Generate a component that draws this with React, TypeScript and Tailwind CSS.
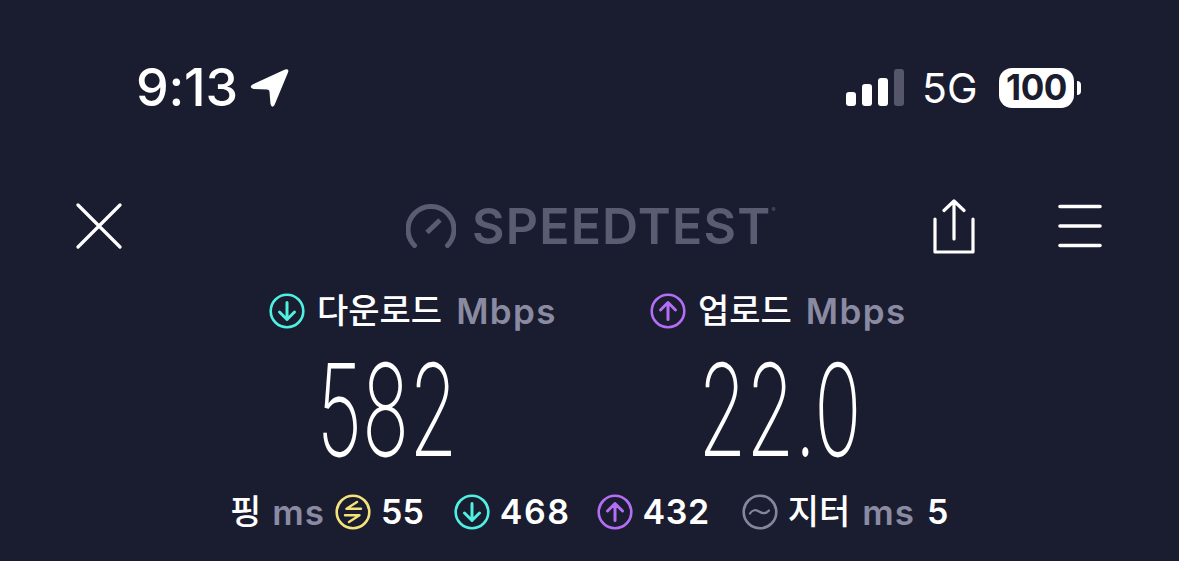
const sans = "font-['Inter','Noto_Sans_CJK_KR',sans-serif]"

function CircleIcon({ color, kind, size = 36 }: { color: string; kind: "down" | "up" | "ping" | "jitter"; size?: number }) {
    return (
        <svg width={size} height={size} viewBox="0 0 36 36" fill="none" stroke={color} strokeLinecap="round" strokeLinejoin="round" className="shrink-0">
            <circle cx="18" cy="18" r="16.3" strokeWidth="2.6" />
            {kind === "down" && <path d="M18 9.500v17M10.500 19l7.500 7.500 7.500-7.500" strokeWidth="3" />}
            {kind === "up" && <path d="M18 26.500v-17M10.500 17l7.500-7.500 7.500 7.500" strokeWidth="3" />}
            {kind === "ping" && <path d="M22 8L11.500 14.800H26M10 21.200H24.500L14 28" strokeWidth="2.400" />}
            {kind === "jitter" && <path d="M8 19.500c2.500-4 6-4 9-2s6.500 3 10-1" strokeWidth="2.200" />}
        </svg>
    )
}

function StatusBar() {
    return (
        <div className="flex h-[68px] items-center justify-between pl-[136px] pr-[98px]">
            <div className="flex items-center gap-[12px]">
                <span className="text-[52px] font-medium leading-none tracking-[-0.2px] text-white">9:13</span>
                <svg width="40" height="40" viewBox="0 0 40 40" fill="#fff">
                    <path d="M35 1.500 Q39.500 0 38 4.500 L24.500 37 Q22 41 20.500 36 L19.500 24 Q19.500 21.500 17 21.500 L3.500 21 Q-1.500 19.500 2.500 16.500 Z" />
                </svg>
            </div>
            <div className="flex items-center">
                <div className="mb-[3px] flex h-[38px] items-end gap-[6px]">
                    <div className="h-[14px] w-[10px] rounded-[3px] bg-white" />
                    <div className="h-[22px] w-[10px] rounded-[3px] bg-white" />
                    <div className="h-[28px] w-[10px] rounded-[3px] bg-white" />
                    <div className="h-[37px] w-[10px] rounded-[3px] bg-[#55566a]" />
                </div>
                <span className="ml-[18px] text-[41px] leading-none tracking-[0.3px] text-white">5G</span>
                <div className="mb-[1px] ml-[21px] flex h-[40px] w-[75px] items-center justify-center rounded-[13px] bg-white">
                    <span className="text-[35px] font-bold leading-none tracking-[-0.5px] text-[#1a1c30]">100</span>
                </div>
                <div className="ml-[3px] h-[14px] w-[4px] rounded-r-full bg-white" />
            </div>
        </div>
    )
}

function NavBar() {
    return (
        <div className="mt-[69px] flex h-[70px] items-center pl-[76px] pr-[77px]">
            <svg width="46" height="46" viewBox="0 0 46 46" stroke="#fff" strokeWidth="3.200" strokeLinecap="round" className="shrink-0">
                <path d="M2 2l42 42M44 2L2 44" />
            </svg>
            <div className="ml-[284px] flex items-center">
                <svg width="50" height="44" viewBox="0 0 50 44" fill="none" stroke="#5a5c72" strokeLinecap="round">
                    <path d="M8.500 41.500A23 23 0 1 1 41.500 41.500" strokeWidth="5" />
                    <path d="M21 28.500L34 16" strokeWidth="5" strokeLinecap="butt" />
                </svg>
                <span className="ml-[16px] text-[50px] font-semibold leading-none tracking-[1.2px] text-[#5a5c72]">SPEEDTEST</span>
                <span className="mb-[32px] text-[6px] leading-none text-[#5a5c72]">®</span>
            </div>
            <svg width="44" height="56" viewBox="0 0 44 56" fill="none" stroke="#fff" strokeWidth="3.200" strokeLinecap="round" strokeLinejoin="round" className="ml-auto mt-[2px]">
                <path d="M23 2v38M13 11.500L23 2l10 9.500M4 20v33h38V20" />
            </svg>
            <svg width="44" height="44" viewBox="0 0 44 44" stroke="#fff" strokeWidth="3.600" strokeLinecap="round" className="ml-[83px]">
                <path d="M2 2.500h40M2 22h40M2 41.500h40" />
            </svg>
        </div>
    )
}

function SpeedColumn({ kind, color, label, value, width, numberWidth }: { kind: "down" | "up"; color: string; label: string; value: string; width: string; numberWidth: string }) {
    return (
        <div className={`flex flex-col ${width}`}>
            <div className="flex h-[38px] items-center">
                <CircleIcon kind={kind} color={color} />
                <span className="ml-[12px] text-[34px] font-medium leading-none text-white">{label}</span>
                <span className="ml-[14px] text-[35px] font-semibold leading-none tracking-[1.4px] text-[#8a8ba2]">Mbps</span>
            </div>
            <div className={`mt-[30px] flex h-[100px] items-center justify-center ${numberWidth}`}>
                <span className="shrink-0 origin-center scale-x-[0.61] text-[128px] font-extralight leading-[100px] text-white">{value}</span>
            </div>
        </div>
    )
}

function StatsRow() {
    return (
        <div className="mt-[32px] flex h-[40px] items-center pl-[230px] text-[34px] font-semibold leading-none text-white">
            <span className="font-medium">핑</span>
            <span className="ml-[11px] text-[35px] tracking-[1px] text-[#8a8ba2]">ms</span>
            <div className="ml-[10px]"><CircleIcon kind="ping" color="#f4e27a" /></div>
            <span className="ml-[10px]">55</span>
            <div className="ml-[30px]"><CircleIcon kind="down" color="#4ff0e0" /></div>
            <span className="ml-[10px] tracking-[1.5px]">468</span>
            <div className="ml-[27px]"><CircleIcon kind="up" color="#b36ef5" /></div>
            <span className="ml-[9px] tracking-[0.6px]">432</span>
            <div className="ml-[32px]"><CircleIcon kind="jitter" color="#85869c" /></div>
            <span className="ml-[10px] font-medium">지터</span>
            <span className="ml-[12px] text-[35px] tracking-[1px] text-[#8a8ba2]">ms</span>
            <span className="ml-[12px]">5</span>
        </div>
    )
}

export default function App() {
    return (
        <div className={`${sans} flex h-[561px] w-[1179px] flex-col overflow-hidden bg-[#1a1c30] pt-[54px]`}>
            <StatusBar />
            <NavBar />
            <div className="mt-[31px] flex pl-[269px]">
                <SpeedColumn kind="down" color="#4ff0e0" label="다운로드" value="582" width="w-[381px]" numberWidth="w-[236px]" />
                <SpeedColumn kind="up" color="#b36ef5" label="업로드" value="22.0" width="w-[258px]" numberWidth="w-[260px]" />
            </div>
            <StatsRow />
        </div>
    )
}
